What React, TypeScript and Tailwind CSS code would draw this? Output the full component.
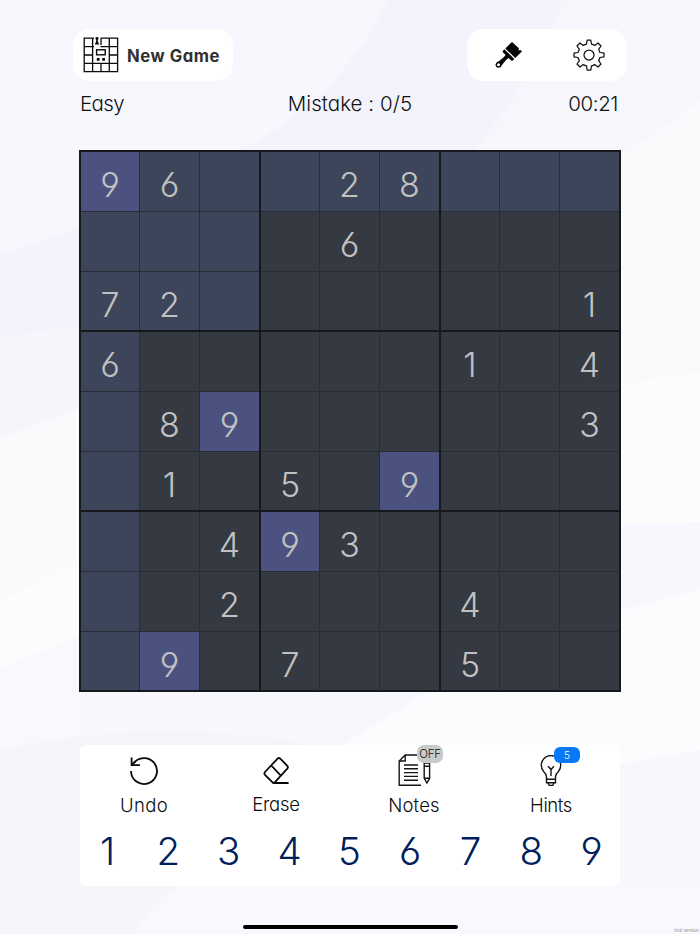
const geo = '[font-family:Inter,"Liberation_Sans",sans-serif] [font-feature-settings:"cv03","cv04","cv11"]';

const board = [
  '96..28...',
  '....6....',
  '72......1',
  '6.....1.4',
  '.89.....3',
  '.1.5.9...',
  '..493....',
  '..2...4..',
  '.9.7..5..',
];

function cellColor(r: number, c: number, v: string) {
  if (v === '9') return 'bg-[#4c5280]';
  if (r === 0 || c === 0 || (r < 3 && c < 3)) return 'bg-[#3d455a]';
  return 'bg-[#353941]';
}

function Backdrop() {
  return (
    <svg className="absolute inset-0 -z-10" width="700" height="934" viewBox="0 0 700 934">
      <rect width="700" height="934" fill="#f7f8fd" />
      <path d="M387 0H563C548 50 510 105 475 150H240C310 115 360 60 387 0Z" fill="#f3f3fb" />
      <path d="M563 0H700V103L620 150H475C510 105 548 50 563 0Z" fill="#f6f7fc" />
      <path d="M0 254L80 228V326L0 337Z" fill="#f3f3fc" />
      <path d="M0 337L80 326V408L0 438Z" fill="#f5f5fb" />
      <path d="M0 438L80 408V560L0 602Z" fill="#f9fafc" />
      <path d="M0 602L80 560V635L0 669Z" fill="#fcfcfc" />
      <path d="M0 669L80 635V745H0Z" fill="#f7f9fe" />
      <path d="M0 751Q160 710 350 752L230 934H0Z" fill="#f4f6fb" />
      <path d="M620 155Q665 130 700 100V372L620 384Z" fill="#f9fafc" />
      <path d="M620 384L700 372V522L620 525Z" fill="#fcfcfc" />
      <path d="M620 525L700 522V589L620 611Z" fill="#f7f8fd" />
      <path d="M620 611L700 589V750L620 764L344 745Q385 717 430 691H620Z" fill="#fbfcfd" />
      <path d="M135 934Q155 900 178 886H700V934Z" fill="#f8f9fe" />
    </svg>
  );
}

function NewGameIcon() {
  return (
    <svg width="36" height="36" viewBox="0 0 36 36" fill="none" stroke="#0a0a0a" strokeWidth="1.3">
      <path d="M11 1.2H1.2V34.6H34.6V1.2H17.5M1.2 9.6H11M17.5 9.6H34.6M1.2 18H10M26 18H34.6M1.2 26.3H34.6M9.6 1.2V34.6M18 26.3V34.6M18 1.2V8M26.3 1.2V34.6" />
      <rect x="13.6" y="12.8" width="8.6" height="5" strokeWidth="1.4" />
      <path d="M13.8 22.3H16.6M19.2 22.3H22" strokeWidth="2.8" />
      <path d="M14 0A1.4 1.4 0 0 1 15 2.5L14.7 4L16.2 7.4H11.8L13.3 4L13 2.5A1.4 1.4 0 0 1 14 0Z" fill="#0a0a0a" stroke="none" />
    </svg>
  );
}

function BrushIcon() {
  return (
    <svg width="28" height="28" viewBox="0 0 28 28" fill="#050505">
      <path d="M17 .9L10.3 7.4L20.2 17.1L26.9 10.4L25.6 9L23.6 9.4L23.9 7.4L22.8 6.3Z" />
      <path d="M9.4 8.3L19.3 18L17.9 19.4Q17 20.2 16.1 19.4L13.6 17L11.2 18.7L7.4 23.6Q6 27 3.4 26.8Q.3 26.3 .6 23.2Q1 20.8 4.2 20L8.8 16.2L10.6 13.9L8.1 11.4Q7.3 10.6 8 9.8Z" />
      <circle cx="3.5" cy="23.7" r="1.5" fill="white" />
    </svg>
  );
}

function GearIcon() {
  return (
    <svg width="32" height="32" viewBox="0 0 32 32" fill="none" stroke="#111" strokeWidth="1.25" strokeLinejoin="round">
      <path d="M14.2 1H17.8L18.5 5.1Q20.2 5.5 21.7 6.4L25 4L28 7L25.6 10.3Q26.5 11.8 26.9 13.5L31 14.2V17.8L26.9 18.5Q26.5 20.2 25.6 21.7L28 25L25 28L21.7 25.6Q20.2 26.5 18.5 26.9L17.8 31H14.2L13.5 26.9Q11.8 26.5 10.3 25.6L7 28L4 25L6.4 21.7Q5.5 20.2 5.1 18.5L1 17.8V14.2L5.1 13.5Q5.5 11.8 6.4 10.3L4 7L7 4L10.3 6.4Q11.8 5.5 13.5 5.1Z" />
      <circle cx="16" cy="16" r="5" />
    </svg>
  );
}

function UndoIcon() {
  return (
    <svg width="30" height="30" viewBox="0 0 30 30" fill="none" stroke="#080808" strokeWidth="1.8">
      <path d="M2 15A13 13 0 1 0 4.2 7.8" />
      <path d="M2.6 1.6V9.2H10.9" />
      <path d="M2.6 9.2L6.3 5.4" />
    </svg>
  );
}

function EraserIcon() {
  return (
    <svg className="ml-[2px]" width="28" height="28" viewBox="0 0 28 28" fill="none" stroke="#080808" strokeWidth="1.8" strokeLinejoin="round">
      <path d="M14.6 1.6Q16 .4 17.3 1.7L24.3 8.8Q25.5 10.2 24.3 11.6L12 25.2Q10.7 26.4 9.3 25.2L2 17.8Q.8 16.5 2 15ZM8.3 8.5L17.8 18.6M10.5 26H25.6" />
    </svg>
  );
}

function NotesIcon() {
  return (
    <svg className="ml-[2px]" width="34" height="34" viewBox="0 0 34 34" fill="none" stroke="#151515" strokeWidth="1.4">
      <path d="M22 1H7.2L1.2 7V31.3H23M7.2 1V7H1.2" />
      <path d="M6 11H20M6 14.8H20M6 18.6H20M6 22.4H20M6 26.2H20" />
      <path d="M26.2 9H31.6V24.3L28.9 29L26.2 24.3ZM26.2 12.3H31.6M26.2 24.3H31.6M27.7 27L28.9 29L30 27" />
    </svg>
  );
}

function BulbIcon() {
  return (
    <svg width="22" height="32" viewBox="0 0 22 32" fill="none" stroke="#151515" strokeWidth="1.4">
      <path d="M6.5 24.2V21.8Q6.5 19.2 3.6 16.5A9.7 9.7 0 1 1 18.4 16.5Q15.5 19.2 15.5 21.8V24.2ZM6.5 24.2V27.8H15.5V24.2M8 28L9.2 30.4H12.8L14 28M11 21V14.4L8 11.2M11 14.4L14 11.2" />
    </svg>
  );
}

const label = 'text-[18.5px] leading-[22px] font-light text-[#0c0c0c] whitespace-nowrap';

export default function App() {
  return (
    <div className={`relative isolate flex h-[934px] w-[700px] flex-col overflow-hidden ${geo}`}>
      <Backdrop />
      <header className="mx-[73px] mt-[29px] flex h-[52px] justify-between">
        <button className="flex w-[160px] items-center rounded-[17px] bg-white pl-[10px]">
          <NewGameIcon />
          <span className="mt-1 ml-2 text-[16.7px] font-bold tracking-[0.52px] whitespace-nowrap text-[#303033]">New Game</span>
        </button>
        <div className="flex w-[160px] items-center justify-between rounded-[17px] bg-white pr-[22px] pl-[28px]">
          <BrushIcon />
          <GearIcon />
        </div>
      </header>
      <div className="mx-20 mt-[11px] grid h-6 grid-cols-3 items-center text-[20.5px] leading-6 font-light whitespace-nowrap text-[#111]">
        <span className="tracking-[-0.6px]">Easy</span>
        <span className="text-center tracking-[0.05px]">Mistake : 0/5</span>
        <span className="pr-[2px] text-right tracking-[-0.4px]">00:21</span>
      </div>
      <main className="mx-[79px] mt-[34px] grid h-[542px] w-[542px] grid-cols-3 grid-rows-3 gap-[2px] border-2 border-[#17181c] bg-[#17181c]">
        {[0, 1, 2, 3, 4, 5, 6, 7, 8].map((b) => (
          <section key={b} className="grid grid-cols-[58px_59px_59px] grid-rows-[59px_59px_58px] gap-px bg-[#292c34]">
            {[0, 1, 2, 3, 4, 5, 6, 7, 8].map((i) => {
              const r = Math.floor(b / 3) * 3 + Math.floor(i / 3);
              const c = (b % 3) * 3 + (i % 3);
              const v = board[r][c];
              return (
                <div key={i} className={`flex h-full items-start justify-center pt-[16px] text-[34px] leading-[34px] font-light text-[#c1c1c1] ${cellColor(r, c, v)}`}>
                  {v === '.' ? '' : v}
                </div>
              );
            })}
          </section>
        ))}
      </main>
      <footer className="mx-20 mt-[53px] h-[141px] w-[540px] rounded-md bg-white">
        <div className="flex h-[76px]">
          <div className="ml-[39px] flex w-[50px] flex-col items-center pt-[11px]">
            <UndoIcon />
            <span className={`mt-[8px] tracking-[0.3px] ${label}`}>Undo</span>
          </div>
          <div className="ml-[82px] flex w-[50px] flex-col items-center pt-[12px]">
            <EraserIcon />
            <span className={`mt-[8px] tracking-[-0.3px] ${label}`}>Erase</span>
          </div>
          <div className="relative ml-[87px] flex w-[52px] flex-col items-center pt-[9px]">
            <NotesIcon />
            <span className={`mt-[6px] tracking-[0.2px] ${label}`}>Notes</span>
            <span className="absolute top-0 left-[29px] flex h-[18px] w-[26px] items-center justify-center rounded-[7px] bg-[#c9c9c9] pt-px text-[11.5px] font-light tracking-[-0.3px] text-[#111]">OFF</span>
          </div>
          <div className="relative ml-[89px] flex w-[44px] flex-col items-center pt-[10px]">
            <BulbIcon />
            <span className={`mt-[7px] tracking-[-0.4px] ${label}`}>Hints</span>
            <span className="absolute top-[2px] left-[25px] flex h-4 w-[26px] items-center justify-center rounded-md bg-[#0879f5] text-[10px] font-light text-white">5</span>
          </div>
        </div>
        <div className="flex justify-between pr-[17px] pl-[16px] text-[38.5px] leading-[61px] font-light text-[#00205c]">
          {[1, 2, 3, 4, 5, 6, 7, 8, 9].map((n) => (
            <span key={n} className="w-[23px] text-center">{n}</span>
          ))}
        </div>
      </footer>
      <div className="mx-auto mt-[39px] h-1 w-[215px] shrink-0 rounded-full bg-black" />
      <span className="absolute right-px bottom-0 text-[4.5px] leading-[6px] text-[#8b8b8b]">trial version</span>
    </div>
  );
}
